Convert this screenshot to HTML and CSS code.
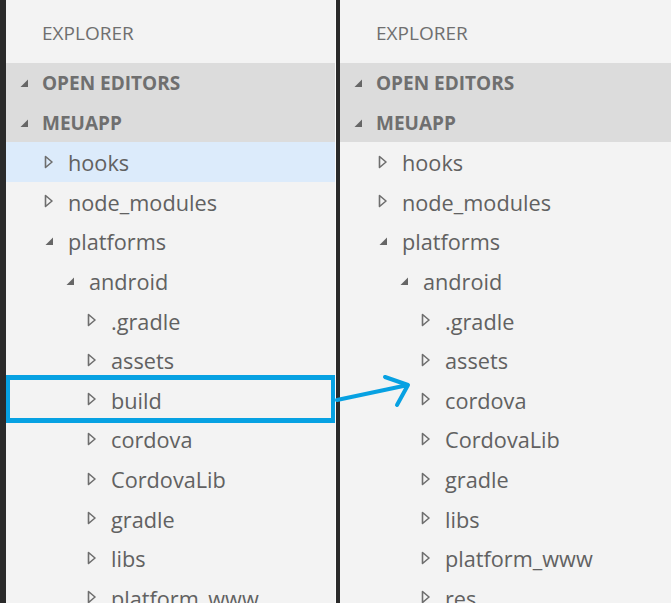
FILE: index.html
```html
<!DOCTYPE html>
<html>
<head>
<meta charset="utf-8">
<link rel="stylesheet" href="styles.css">
</head>
<body>
<div class="frame">
  <div class="panel left">
    <div class="title">EXPLORER</div>
    <div class="sections">
      <div class="section"><span class="tw"><svg width="10" height="10" viewBox="0 0 10 10"><path d="M9 1.5 L9 9 L1.5 9 Z" fill="#666"/></svg></span>OPEN EDITORS</div>
      <div class="section"><span class="tw"><svg width="10" height="10" viewBox="0 0 10 10"><path d="M9 1.5 L9 9 L1.5 9 Z" fill="#666"/></svg></span>MEUAPP</div>
    </div>
    <div class="row l1 selected"><span class="tw"><svg class="col" width="10" height="14" viewBox="0 0 10 14"><path d="M1.5 1.5 L8 7 L1.5 12.5 Z"/></svg></span>hooks</div>
    <div class="row l1"><span class="tw"><svg class="col" width="10" height="14" viewBox="0 0 10 14"><path d="M1.5 1.5 L8 7 L1.5 12.5 Z"/></svg></span>node_modules</div>
    <div class="row l1"><span class="tw"><svg width="10" height="10" viewBox="0 0 10 10"><path d="M9 1.5 L9 9 L1.5 9 Z" fill="#666"/></svg></span>platforms</div>
    <div class="row l2"><span class="tw"><svg width="10" height="10" viewBox="0 0 10 10"><path d="M9 1.5 L9 9 L1.5 9 Z" fill="#666"/></svg></span>android</div>
    <div class="row l3"><span class="tw"><svg class="col" width="10" height="14" viewBox="0 0 10 14"><path d="M1.5 1.5 L8 7 L1.5 12.5 Z"/></svg></span>.gradle</div>
    <div class="row l3"><span class="tw"><svg class="col" width="10" height="14" viewBox="0 0 10 14"><path d="M1.5 1.5 L8 7 L1.5 12.5 Z"/></svg></span>assets</div>
    <div class="row l3"><span class="tw"><svg class="col" width="10" height="14" viewBox="0 0 10 14"><path d="M1.5 1.5 L8 7 L1.5 12.5 Z"/></svg></span>build</div>
    <div class="row l3"><span class="tw"><svg class="col" width="10" height="14" viewBox="0 0 10 14"><path d="M1.5 1.5 L8 7 L1.5 12.5 Z"/></svg></span>cordova</div>
    <div class="row l3"><span class="tw"><svg class="col" width="10" height="14" viewBox="0 0 10 14"><path d="M1.5 1.5 L8 7 L1.5 12.5 Z"/></svg></span>CordovaLib</div>
    <div class="row l3"><span class="tw"><svg class="col" width="10" height="14" viewBox="0 0 10 14"><path d="M1.5 1.5 L8 7 L1.5 12.5 Z"/></svg></span>gradle</div>
    <div class="row l3"><span class="tw"><svg class="col" width="10" height="14" viewBox="0 0 10 14"><path d="M1.5 1.5 L8 7 L1.5 12.5 Z"/></svg></span>libs</div>
    <div class="row l3"><span class="tw"><svg class="col" width="10" height="14" viewBox="0 0 10 14"><path d="M1.5 1.5 L8 7 L1.5 12.5 Z"/></svg></span>platform_www</div>
    <div class="highlight"></div>
  </div>
  <div class="panel right">
    <div class="title">EXPLORER</div>
    <div class="sections">
      <div class="section"><span class="tw"><svg width="10" height="10" viewBox="0 0 10 10"><path d="M9 1.5 L9 9 L1.5 9 Z" fill="#666"/></svg></span>OPEN EDITORS</div>
      <div class="section"><span class="tw"><svg width="10" height="10" viewBox="0 0 10 10"><path d="M9 1.5 L9 9 L1.5 9 Z" fill="#666"/></svg></span>MEUAPP</div>
    </div>
    <div class="row l1"><span class="tw"><svg class="col" width="10" height="14" viewBox="0 0 10 14"><path d="M1.5 1.5 L8 7 L1.5 12.5 Z"/></svg></span>hooks</div>
    <div class="row l1"><span class="tw"><svg class="col" width="10" height="14" viewBox="0 0 10 14"><path d="M1.5 1.5 L8 7 L1.5 12.5 Z"/></svg></span>node_modules</div>
    <div class="row l1"><span class="tw"><svg width="10" height="10" viewBox="0 0 10 10"><path d="M9 1.5 L9 9 L1.5 9 Z" fill="#666"/></svg></span>platforms</div>
    <div class="row l2"><span class="tw"><svg width="10" height="10" viewBox="0 0 10 10"><path d="M9 1.5 L9 9 L1.5 9 Z" fill="#666"/></svg></span>android</div>
    <div class="row l3"><span class="tw"><svg class="col" width="10" height="14" viewBox="0 0 10 14"><path d="M1.5 1.5 L8 7 L1.5 12.5 Z"/></svg></span>.gradle</div>
    <div class="row l3"><span class="tw"><svg class="col" width="10" height="14" viewBox="0 0 10 14"><path d="M1.5 1.5 L8 7 L1.5 12.5 Z"/></svg></span>assets</div>
    <div class="row l3"><span class="tw"><svg class="col" width="10" height="14" viewBox="0 0 10 14"><path d="M1.5 1.5 L8 7 L1.5 12.5 Z"/></svg></span>cordova</div>
    <div class="row l3"><span class="tw"><svg class="col" width="10" height="14" viewBox="0 0 10 14"><path d="M1.5 1.5 L8 7 L1.5 12.5 Z"/></svg></span>CordovaLib</div>
    <div class="row l3"><span class="tw"><svg class="col" width="10" height="14" viewBox="0 0 10 14"><path d="M1.5 1.5 L8 7 L1.5 12.5 Z"/></svg></span>gradle</div>
    <div class="row l3"><span class="tw"><svg class="col" width="10" height="14" viewBox="0 0 10 14"><path d="M1.5 1.5 L8 7 L1.5 12.5 Z"/></svg></span>libs</div>
    <div class="row l3"><span class="tw"><svg class="col" width="10" height="14" viewBox="0 0 10 14"><path d="M1.5 1.5 L8 7 L1.5 12.5 Z"/></svg></span>platform_www</div>
    <div class="row l3"><span class="tw"><svg class="col" width="10" height="14" viewBox="0 0 10 14"><path d="M1.5 1.5 L8 7 L1.5 12.5 Z"/></svg></span>res</div>
  </div>
  <svg class="arrow" width="90" height="50" viewBox="0 0 90 50">
    <path d="M2 29 L73 14 M50 6 L73 14 L62 34" fill="none" stroke="#07a1e2" stroke-width="4" stroke-linecap="round" stroke-linejoin="round"/>
  </svg>
</div>
</body>
</html>
```

FILE: styles.css
```css
html, body {
  margin: 0;
  padding: 0;
  background: #ffffff;
}

.frame {
  position: relative;
  display: flex;
  height: 603px;
  width: 671px;
  background: #2a2a2a;
  padding-left: 6px;
  box-sizing: border-box;
  gap: 4px;
  overflow: hidden;
}

.panel {
  position: relative;
  background: #f3f3f3;
  font-family: "Open Sans", "Noto Sans", sans-serif;
  overflow: hidden;
}

.panel.left {
  width: 330px;
  border-right: 1px solid #fbfbfb;
  box-sizing: border-box;
}

.panel.right {
  flex: 1;
}

.title {
  height: 63px;
  display: flex;
  align-items: center;
  padding-left: 36px;
  padding-top: 2px;
  box-sizing: border-box;
  font-size: 19px;
  color: #6f6f6f;
}

.sections {
  background: #dcdcdc;
}

.section {
  height: 39.5px;
  display: flex;
  align-items: center;
  padding-left: 13px;
  padding-top: 1px;
  box-sizing: border-box;
  font-size: 19px;
  font-weight: 700;
  color: #6f6f6f;
}

.section .tw {
  width: 23px;
}

.tw {
  display: inline-flex;
  align-items: center;
  width: 24px;
  flex: none;
}

.tw svg.col path {
  fill: none;
  stroke: #6e6e6e;
  stroke-width: 1.6;
  stroke-linejoin: round;
}

.row {
  height: 39.6px;
  display: flex;
  align-items: center;
  padding-top: 2px;
  box-sizing: border-box;
  font-size: 21.7px;
  color: #616161;
  white-space: nowrap;
}

.row .tw {
  margin-top: -2px;
}

.row.l1 { padding-left: 38px; }
.row.l2 { padding-left: 59px; }
.row.l3 { padding-left: 81px; }

.row.selected {
  background: #dcebfb;
}

.highlight {
  position: absolute;
  left: -1px;
  top: 375px;
  width: 331px;
  height: 48px;
  border: 5px solid #07a1e2;
  box-sizing: border-box;
}

.arrow {
  position: absolute;
  left: 335px;
  top: 371px;
  overflow: visible;
}
```
